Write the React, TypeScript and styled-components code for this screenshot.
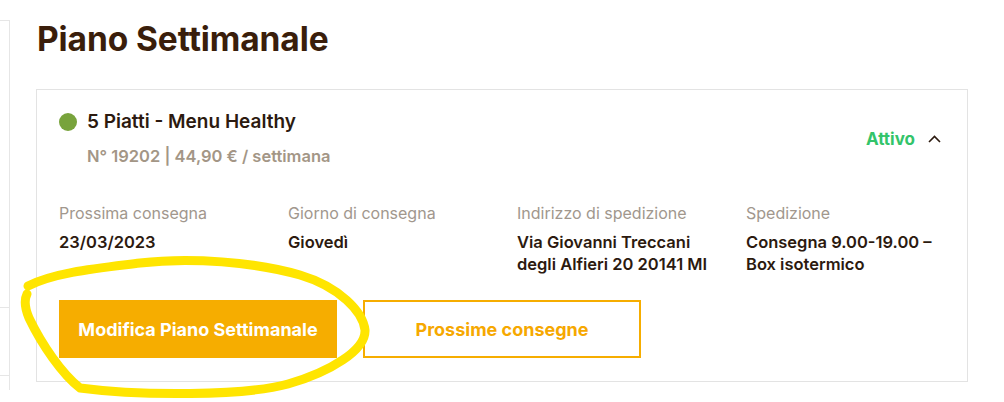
import React from "react";
import styled, { createGlobalStyle } from "styled-components";

const Global = createGlobalStyle`
  html, body { margin: 0; padding: 0; background: #ffffff; }
  body { font-family: Inter, "Noto Sans", sans-serif; -webkit-font-smoothing: antialiased; }
  * { box-sizing: border-box; }
`;

const Page = styled.div`
  position: relative;
  width: 1004px;
  height: 402px;
  display: flex;
  overflow: hidden;
`;

const Sidebar = styled.aside`
  width: 10px;
  height: 370px;
  margin-top: 20px;
  border-top: 1px solid #e6e6e6;
  border-right: 1px solid #e6e6e6;
  display: flex;
  flex-direction: column;
`;

const SideFill = styled.div<{ $h: number; $line?: boolean }>`
  height: ${(p) => p.$h}px;
  border-bottom: ${(p) => (p.$line ? "1px solid #e6e6e6" : "none")};
`;

const Main = styled.main`
  flex: 1;
  padding-left: 26px;
  padding-right: 36px;
`;

const Title = styled.h1`
  margin: 18px 0 0 1px;
  font-size: 33.5px;
  line-height: 42px;
  font-weight: 700;
  color: #3a1e0b;
  letter-spacing: -0.1px;
`;

const Card = styled.section`
  margin-top: 29px;
  width: 932px;
  border: 1px solid #e3e3e3;
  padding: 19px 26px 23px 22px;
`;

const Header = styled.div`
  display: flex;
  align-items: center;
  justify-content: space-between;
`;

const PlanInfo = styled.div`
  display: flex;
  flex-direction: column;
`;

const PlanRow = styled.div`
  display: flex;
  align-items: center;
  gap: 10px;
`;

const Dot = styled.span`
  width: 18px;
  height: 18px;
  border-radius: 50%;
  background: #78a33c;
  flex: none;
`;

const PlanName = styled.div`
  font-size: 19px;
  line-height: 26px;
  font-weight: 600;
  color: #2c1a0f;
`;

const PlanMeta = styled.div`
  margin: 10px 0 0 28px;
  font-size: 16.5px;
  line-height: 22px;
  font-weight: 600;
  color: #a39686;
`;

const Status = styled.div`
  display: flex;
  align-items: center;
  gap: 13px;
  margin-top: 2px;
`;

const StatusText = styled.span`
  font-size: 17px;
  font-weight: 700;
  color: #33c46a;
`;

const Grid = styled.div`
  display: grid;
  grid-template-columns: 229px 229px 229px 1fr;
  margin-top: 35px;
`;

const Cell = styled.div`
  display: flex;
  flex-direction: column;
`;

const Label = styled.div`
  font-size: 16px;
  line-height: 22px;
  font-weight: 400;
  color: #a1978d;
`;

const Value = styled.div`
  margin-top: 7px;
  font-size: 16.5px;
  line-height: 22px;
  font-weight: 600;
  color: #2c1a0f;
`;

const Actions = styled.div`
  display: flex;
  gap: 26px;
  margin-top: 25px;
`;

const Button = styled.button<{ $primary?: boolean }>`
  width: 278px;
  height: 58px;
  border: 2px solid #f6ad00;
  background: ${(p) => (p.$primary ? "#f6ad00" : "#ffffff")};
  color: ${(p) => (p.$primary ? "#ffffff" : "#f6a800")};
  font-family: Inter, "Noto Sans", sans-serif;
  font-size: 18px;
  font-weight: 700;
  cursor: pointer;
  padding: 0;
`;

const Scribble = styled.svg`
  position: absolute;
  left: 0;
  top: 0;
  pointer-events: none;
`;

const info = [
  { label: "Prossima consegna", value: ["23/03/2023"] },
  { label: "Giorno di consegna", value: ["Giovedì"] },
  { label: "Indirizzo di spedizione", value: ["Via Giovanni Treccani", "degli Alfieri 20 20141 MI"] },
  { label: "Spedizione", value: ["Consegna 9.00-19.00 –", "Box isotermico"] },
];

export default function App() {
  return (
    <>
      <Global />
      <Page>
        <Sidebar>
          <SideFill $h={287} $line />
          <SideFill $h={68} $line />
        </Sidebar>
        <Main>
          <Title>Piano Settimanale</Title>
          <Card>
            <Header>
              <PlanInfo>
                <PlanRow>
                  <Dot />
                  <PlanName>5 Piatti - Menu Healthy</PlanName>
                </PlanRow>
                <PlanMeta>N° 19202 | 44,90 € / settimana</PlanMeta>
              </PlanInfo>
              <Status>
                <StatusText>Attivo</StatusText>
                <svg width="13" height="8" viewBox="0 0 13 8">
                  <polyline points="1,7 6.5,1.5 12,7" fill="none" stroke="#2c1a0f" strokeWidth="1.6" />
                </svg>
              </Status>
            </Header>
            <Grid>
              {info.map((c) => (
                <Cell key={c.label}>
                  <Label>{c.label}</Label>
                  <Value>
                    {c.value.map((v, i) => (
                      <div key={i}>{v}</div>
                    ))}
                  </Value>
                </Cell>
              ))}
            </Grid>
            <Actions>
              <Button $primary>Modifica Piano Settimanale</Button>
              <Button>Prossime consegne</Button>
            </Actions>
          </Card>
        </Main>
        <Scribble width="1004" height="402" viewBox="0 0 1004 402">
          <path
            d="M 28 286 C 55 272, 100 268, 140 263 C 190 257, 255 262, 300 275 C 340 287, 363 312, 365 330 C 366 350, 330 372, 288 384 C 245 396, 140 396, 80 388 C 62 374, 42 345, 29 318 C 24 306, 25 298, 27 294"
            fill="none"
            stroke="#ffe500"
            strokeWidth="9"
            strokeLinecap="round"
          />
        </Scribble>
      </Page>
    </>
  );
}
